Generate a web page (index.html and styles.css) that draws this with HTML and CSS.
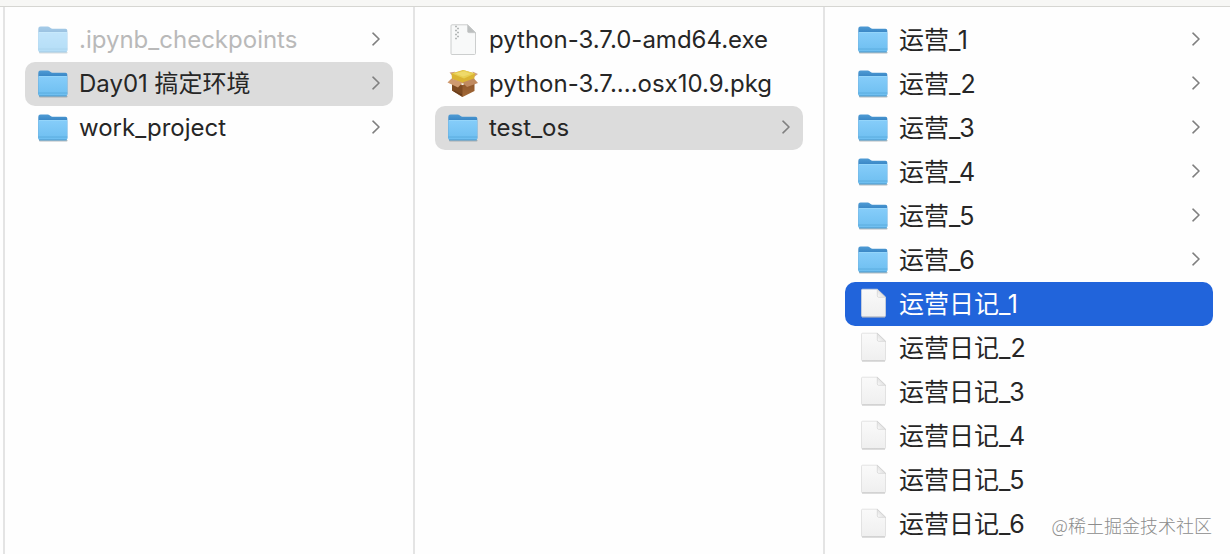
FILE: index.html
```
<!DOCTYPE html>
<html lang="zh-CN">
<head>
<meta charset="utf-8">
<title>Finder</title>
<link rel="stylesheet" href="styles.css">
</head>
<body>
<svg class="defs" aria-hidden="true">
  <defs>
    <linearGradient id="gBack" x1="0" y1="0" x2="0" y2="1"><stop offset="0" stop-color="#4f9bd5"/><stop offset=".3" stop-color="#3583c2"/></linearGradient>
    <linearGradient id="gFront" x1="0" y1="0" x2="0" y2="1"><stop offset="0" stop-color="#86cdfa"/><stop offset="1" stop-color="#6dbef0"/></linearGradient>
    <linearGradient id="gDoc" x1="0" y1="0" x2="0" y2="1"><stop offset="0" stop-color="#fafafa"/><stop offset="1" stop-color="#efefef"/></linearGradient>
    <linearGradient id="gFold" x1="0" y1="1" x2="1" y2="0"><stop offset="0" stop-color="#fff"/><stop offset="1" stop-color="#c4c4c4"/></linearGradient>
    <linearGradient id="gBox" x1="0" y1="0" x2="0" y2="1"><stop offset="0" stop-color="#8a5228"/><stop offset="1" stop-color="#a36a38"/></linearGradient>
  </defs>
  <symbol id="folder" viewBox="0 0 32 32">
    <path d="M2 28h28.500v.7q0 .8-.8.8H2.800q-.8 0-.8-.8z" fill="#8b9499" opacity=".6"/>
    <path d="M1.300 4.700Q1.300 2.500 3.500 2.500h7.300q1 0 1.800.7l1 .9q.8.600 1.800.600H28.500Q30.300 4.700 30.300 6.500v20H1.300z" fill="url(#gBack)"/>
    <path d="M1.300 9Q1.300 8 2.300 8h27q1 0 1 1V26.500q0 1.800-1.800 1.800H3.100Q1.300 28.300 1.300 26.500z" fill="url(#gFront)"/>
    <path d="M1.800 8.500h28" stroke="#9bd8fb" stroke-width=".7"/>
    <path d="M1.300 25h29" stroke="#55a8db" stroke-width=".8"/>
    <path d="M2 27.900h27.800" stroke="#4d99ca" stroke-width=".9"/>
  </symbol>
  <symbol id="doc" viewBox="0 0 32 32">
    <path d="M5.500 1.200h14.800L28.500 9V27.700q0 1-1 1h-22q-1 0-1-1V2.200q0-1 1-1z" fill="url(#gDoc)" stroke="#d8d8d8" stroke-width=".7"/>
    <path d="M5 29h23" stroke="#bdbdbd" stroke-width=".9"/>
    <path d="M20.300 1.300l8.200 8h-6.700q-1.500 0-1.500-1.500z" fill="url(#gFold)" stroke="#c9c9c9" stroke-width=".6"/>
  </symbol>
  <symbol id="zip" viewBox="0 0 32 32">
    <path d="M5 .8h15.500L28.500 8.500V29.500q0 1-1 1H5q-1 0-1-1V1.800q0-1 1-1z" fill="#f8f9f9" stroke="#c6c8c8" stroke-width=".9"/>
    <path d="M20.500 .8l8 7.900h-6.500q-1.500 0-1.500-1.500z" fill="#bcbfbf" stroke="#c6c8c8" stroke-width=".6"/>
    <path d="M8 2.500h2m0 2h2m-4 2h2m0 2h2m-4 2h2m0 2h2m-4 2h2" stroke="#b4b8b8" stroke-width="1.500"/>
  </symbol>
  <symbol id="package" viewBox="0 0 32 32">
    <path d="M5 12l10.500 5L27.500 12v11L15.500 29 5 22.500z" fill="url(#gBox)"/>
    <path d="M5 13l10.500 5V29L5 22.500z" fill="#7d4a22"/>
    <path d="M2.500 4.500l5.500-.8L6 8.500zM25.500 3.500l5.500 2.500-4 3z" fill="#cfa084"/>
    <path d="M4.500 5.500L16 2l12 3.500L27 12.500 15.500 15.500 5 11z" fill="#dbb433"/>
    <path d="M5 5.500L17 2.200 28 5.500l-11 5z" fill="#e8cf52"/>
    <path d="M8 5.500l9-2.300L24 6l-8 2.500z" fill="#f0dc70" opacity=".8"/>
    <path d="M4.500 10.500l11 4-4.500 5L.5 14.500z" fill="#cf9a70"/>
    <path d="M15.500 14.500L27 10.500l4 4.500-11 4z" fill="#c08a60"/>
    <path d="M7 23l8 4" stroke="#5b3417" stroke-width=".8"/>
  </symbol>
  <symbol id="chevron" viewBox="0 0 8 14">
    <path d="M1 1.200l6 5.800-6 5.800" fill="none" stroke="currentColor" stroke-width="1.600" stroke-linecap="round" stroke-linejoin="round"/>
  </symbol>
</svg>
<header class="toolbar"></header>
<main class="browser">
  <ul class="column">
    <li><a class="row hidden-item" href="#"><svg class="icon"><use href="#folder"/></svg><span class="name">.ipynb_checkpoints</span><svg class="chevron"><use href="#chevron"/></svg></a></li>
    <li><a class="row open" href="#"><svg class="icon"><use href="#folder"/></svg><span class="name">Day01 搞定环境</span><svg class="chevron"><use href="#chevron"/></svg></a></li>
    <li><a class="row" href="#"><svg class="icon"><use href="#folder"/></svg><span class="name">work_project</span><svg class="chevron"><use href="#chevron"/></svg></a></li>
  </ul>
  <ul class="column">
    <li><a class="row" href="#"><svg class="icon"><use href="#zip"/></svg><span class="name">python-3.7.0-amd64.exe</span></a></li>
    <li><a class="row" href="#"><svg class="icon"><use href="#package"/></svg><span class="name">python-3.7....osx10.9.pkg</span></a></li>
    <li><a class="row open" href="#"><svg class="icon"><use href="#folder"/></svg><span class="name">test_os</span><svg class="chevron"><use href="#chevron"/></svg></a></li>
  </ul>
  <ul class="column column-cjk">
    <li><a class="row" href="#"><svg class="icon"><use href="#folder"/></svg><span class="name">运营_1</span><svg class="chevron"><use href="#chevron"/></svg></a></li>
    <li><a class="row" href="#"><svg class="icon"><use href="#folder"/></svg><span class="name">运营_2</span><svg class="chevron"><use href="#chevron"/></svg></a></li>
    <li><a class="row" href="#"><svg class="icon"><use href="#folder"/></svg><span class="name">运营_3</span><svg class="chevron"><use href="#chevron"/></svg></a></li>
    <li><a class="row" href="#"><svg class="icon"><use href="#folder"/></svg><span class="name">运营_4</span><svg class="chevron"><use href="#chevron"/></svg></a></li>
    <li><a class="row" href="#"><svg class="icon"><use href="#folder"/></svg><span class="name">运营_5</span><svg class="chevron"><use href="#chevron"/></svg></a></li>
    <li><a class="row" href="#"><svg class="icon"><use href="#folder"/></svg><span class="name">运营_6</span><svg class="chevron"><use href="#chevron"/></svg></a></li>
    <li><a class="row selected" href="#"><svg class="icon"><use href="#doc"/></svg><span class="name">运营日记_1</span></a></li>
    <li><a class="row" href="#"><svg class="icon"><use href="#doc"/></svg><span class="name">运营日记_2</span></a></li>
    <li><a class="row" href="#"><svg class="icon"><use href="#doc"/></svg><span class="name">运营日记_3</span></a></li>
    <li><a class="row" href="#"><svg class="icon"><use href="#doc"/></svg><span class="name">运营日记_4</span></a></li>
    <li><a class="row" href="#"><svg class="icon"><use href="#doc"/></svg><span class="name">运营日记_5</span></a></li>
    <li><a class="row" href="#"><svg class="icon"><use href="#doc"/></svg><span class="name">运营日记_6</span></a></li>
  </ul>
</main>
<div class="watermark">@稀土掘金技术社区</div>
</body>
</html>
```
FILE: styles.css
```
* { box-sizing: border-box; }

body {
  margin: 0;
  min-height: 100vh;
  display: flex;
  flex-direction: column;
  overflow: hidden;
  background: #fefefe;
  color: #262626;
  font: 24px/44px Inter, "Noto Sans CJK SC", sans-serif;
}

.defs {
  position: absolute;
  width: 0;
  height: 0;
}

.toolbar {
  height: 7px;
  background: #f7f7f5;
  border-bottom: 1px solid #d6d6d2;
}

.browser {
  flex: 1;
  display: grid;
  grid-template-columns: repeat(3, 1fr);
  margin: 0 -3px 0 3px;
}

.column {
  margin: 0;
  padding: 11px 20px 0;
  list-style: none;
  border-left: 2px solid #e4e4e4;
}

.column-cjk { font-size: 25px; }

.row {
  display: flex;
  align-items: center;
  height: 44px;
  padding: 0 13px 0 12px;
  border-radius: 10px;
  color: inherit;
  text-decoration: none;
}

.open { background: #dcdcdc; }

.selected {
  background: #2164db;
  color: #fff;
}

.icon {
  flex: none;
  width: 32px;
  height: 32px;
  margin-right: 10px;
}

.name {
  flex: 1;
  white-space: nowrap;
}

.chevron {
  flex: none;
  width: 8px;
  height: 14px;
  margin-bottom: 2px;
  color: #808080;
}

.hidden-item .name { color: #b9b9b9; }
.hidden-item .icon { opacity: .5; }

.watermark {
  position: absolute;
  right: 18px;
  bottom: 17px;
  font: 18px/24px "Noto Sans CJK SC", sans-serif;
  font-weight: 300;
  color: #8c8c8c;
}
```
